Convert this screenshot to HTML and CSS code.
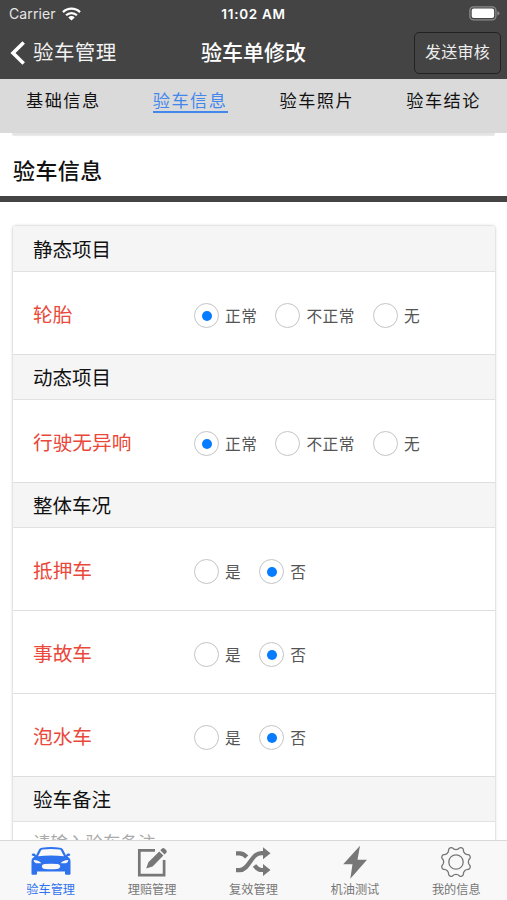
FILE: index.html
```html
<!DOCTYPE html>
<html lang="zh-CN">
<head>
<meta charset="utf-8">
<title>验车单修改</title>
<link rel="stylesheet" href="styles.css">
</head>
<body>
<div class="screen">
  <header class="header">
    <div class="status">
      <div class="carrier">Carrier
        <svg class="wifi" width="19" height="14" viewBox="0 0 19 14"><g fill="none" stroke="#fff" stroke-width="2.3"><path d="M1 5.1a12.2 12.2 0 0 1 17 0"/><path d="M4.1 8.3a7.7 7.7 0 0 1 10.8 0"/></g><path d="M6.3 10.4a4.6 4.6 0 0 1 6.4 0L9.500 13.600z" fill="#fff"/></svg>
      </div>
      <div class="time">11:02 AM</div>
      <svg class="battery" width="31" height="15" viewBox="0 0 31 15"><rect x=".9" y=".8" width="26" height="13" rx="3.6" fill="none" stroke="#8b8b8b" stroke-width="1.3"/><rect x="2.700" y="2.600" width="22.400" height="9.400" rx="2" fill="#fff"/><path d="M28.400 5q2 .7 2 2.300t-2 2.300z" fill="#8b8b8b"/></svg>
    </div>
    <div class="navbar">
      <a class="back"><svg width="16" height="24" viewBox="0 0 16 24"><path d="M13.700 1.500 3 12l10.700 10.500" fill="none" stroke="#fff" stroke-width="3.600"/></svg><span>验车管理</span></a>
      <h1 class="title">验车单修改</h1>
      <div class="action"><button class="submit">发送审核</button></div>
    </div>
  </header>
  <nav class="tabs">
    <a class="tab"><span>基础信息</span></a>
    <a class="tab active"><span>验车信息</span></a>
    <a class="tab"><span>验车照片</span></a>
    <a class="tab"><span>验车结论</span></a>
  </nav>
  <main class="content">
    <div class="previous-card"></div>
    <h2 class="section-title">验车信息</h2>
    <section class="card">
      <h3 class="group">静态项目</h3>
      <div class="row"><span class="label">轮胎</span><div class="options"><label class="option"><i class="radio on"></i><span>正常</span></label><label class="option"><i class="radio"></i><span>不正常</span></label><label class="option"><i class="radio"></i><span>无</span></label></div></div>
      <h3 class="group">动态项目</h3>
      <div class="row"><span class="label">行驶无异响</span><div class="options"><label class="option"><i class="radio on"></i><span>正常</span></label><label class="option"><i class="radio"></i><span>不正常</span></label><label class="option"><i class="radio"></i><span>无</span></label></div></div>
      <h3 class="group">整体车况</h3>
      <div class="row"><span class="label">抵押车</span><div class="options"><label class="option"><i class="radio"></i><span>是</span></label><label class="option"><i class="radio on"></i><span>否</span></label></div></div>
      <div class="row"><span class="label">事故车</span><div class="options"><label class="option"><i class="radio"></i><span>是</span></label><label class="option"><i class="radio on"></i><span>否</span></label></div></div>
      <div class="row"><span class="label">泡水车</span><div class="options"><label class="option"><i class="radio"></i><span>是</span></label><label class="option"><i class="radio on"></i><span>否</span></label></div></div>
      <h3 class="group">验车备注</h3>
      <div class="note">请输入验车备注</div>
    </section>
  </main>
  <footer class="tabbar">
    <a class="item selected">
      <svg width="42" height="34" viewBox="0 0 42 34"><path fill="currentColor" fill-rule="evenodd" d="M9 4.500Q10 3 12 2.700q9-1.200 18 0Q32 3 33 4.500l3 6 1-1.700q3-.7 3.400 1.200-.4 1-3 1.200 2.900 2 3.100 5v12.500q0 1-1 1h-3.500q-1 0-1-1v-2.300H7v2.300q0 1-1 1H2.500q-1 0-1-1V16.200q.2-3 3.100-5-2.600-.2-3-1.200.4-1.900 3.400-1.200l1 1.700zm2 .9L8 11.200q13-1.500 26 0l-3-5.800q-.5-.8-1.500-1-8.500-.9-17 0-1 .2-1.500 1zM3.600 14.900q.2 3 2.400 3.300l5.300.1q-1.800-3-7.700-3.400zm34.800 0q-5.900.4-7.700 3.400l5.300-.1q2.200-.3 2.400-3.300zM14.500 19q-2.700.2-2.700 2.200 0 2.400 3.200 2.700 6 .6 12 0 3.200-.3 3.200-2.700 0-2-2.700-2.200-6.500-.5-13 0z"/></svg>
      <span>验车管理</span>
    </a>
    <a class="item">
      <svg width="34" height="34" viewBox="0 0 34 34"><path d="M20 5.400H4.300v24.800h24.800V15" fill="none" stroke="currentColor" stroke-width="2.700"/><path d="m11.200 23.500 2.200-6.300L24.200 6.400l4.200 4.200-10.800 10.800zM25.300 5.300l1.800-1.800q1.200-1 2.400 0l1.800 1.800q1 1.200 0 2.400l-1.800 1.800z" fill="currentColor"/></svg>
      <span>理赔管理</span>
    </a>
    <a class="item">
      <svg width="38" height="34" viewBox="0 0 38 34"><g fill="none" stroke="currentColor" stroke-width="4.200"><path d="M2 25.200h3.500c10 0 11-17 22-17h2.700"/><path d="M2 8.400h3.500q4 0 7.200 3.600M20.500 20.500q3.300 4.500 7.200 4.500h2.500"/></g><path d="m29 2.200 7.500 6-7.500 6zM29 19l7.500 6-7.500 6z" fill="currentColor"/></svg>
      <span>复效管理</span>
    </a>
    <a class="item">
      <svg width="26" height="34" viewBox="0 0 26 34"><path d="M18 .700 1.200 19.200h9.300L8.300 33.700 25 14.700h-9.500z" fill="currentColor"/></svg>
      <span>机油测试</span>
    </a>
    <a class="item">
      <svg width="34" height="34" viewBox="-17 -17 34 34"><g fill="none" stroke="currentColor" stroke-width="1.300" stroke-linejoin="round"><path d="M14.040 3.630A2.800 2.800 0 0 1 12.490 7.360A4.700 4.700 0 0 0 7.360 12.490A2.800 2.800 0 0 1 3.630 14.040A4.700 4.700 0 0 0-3.630 14.040A2.800 2.800 0 0 1-7.360 12.490A4.700 4.700 0 0 0-12.490 7.360A2.800 2.800 0 0 1-14.040 3.630A4.700 4.700 0 0 0-14.040-3.630A2.800 2.800 0 0 1-12.490-7.360A4.700 4.700 0 0 0-7.360-12.490A2.800 2.800 0 0 1-3.630-14.040A4.700 4.700 0 0 0 3.630-14.040A2.800 2.800 0 0 1 7.360-12.490A4.700 4.700 0 0 0 12.490-7.360A2.800 2.800 0 0 1 14.040-3.630A4.700 4.700 0 0 0 14.040 3.630Z"/><circle r="7.200"/></g></svg>
      <span>我的信息</span>
    </a>
  </footer>
</div>
</body>
</html>
```
FILE: styles.css
```css
* { box-sizing: border-box; }
body { margin: 0; background: #fff; font-family: Inter, "Noto Sans CJK SC", sans-serif; color: #111; }
h1, h2, h3 { margin: 0; font-weight: 400; }
svg { display: block; flex: none; }
.screen { height: 900px; display: flex; flex-direction: column; overflow: hidden; }
.header { flex: none; height: 79px; background: #444; color: #fff; }
.status { height: 27px; display: grid; grid-template-columns: 1fr auto 1fr; align-items: center; padding: 0 7px 0 7px; font-size: 13.500px; }
.carrier { display: flex; align-items: center; gap: 6px; padding-left: 2px; color: #e6e6e6; font-size: 14px; letter-spacing: .1px; }
.time { font-weight: 600; letter-spacing: .7px; }
.battery { justify-self: end; }
.navbar { height: 52px; display: grid; grid-template-columns: 1fr auto 1fr; align-items: center; padding: 0 6px; }
.back { display: flex; align-items: center; gap: 7px; padding: 0 0 0 4px; font-size: 20.500px; letter-spacing: .4px; color: #f2f2f2; line-height: 30px; }
.title { font-size: 21px; font-weight: 500; line-height: 30px; padding-bottom: 1px; }
.action { display: flex; justify-content: flex-end; }
.submit { width: 87px; height: 42px; padding: 0 0 4px; border: 1.500px solid #222; border-radius: 5px; background: none; color: #eee; font: 16px/24px "Noto Sans CJK SC", sans-serif; letter-spacing: .3px; }
.tabs { flex: none; height: 54px; background: #dadada; display: grid; grid-template-columns: repeat(4, 1fr); }
.tab { display: flex; justify-content: center; align-items: flex-start; padding-top: 9px; }
.tab span { display: block; height: 25px; font-size: 17.200px; line-height: 26px; letter-spacing: 1.500px; white-space: nowrap; }
.active span { color: #4387ec; border-bottom: 2px solid #4387ec; }
.content { flex: 1; min-height: 0; overflow: hidden; }
.previous-card { height: 2px; margin: 0 12px; background: #e4e4e4; border-radius: 0 0 3px 3px; box-shadow: 0 1px 1px #e8e8e8; }
.section-title { height: 67px; padding: 20px 13px 0; font-size: 22px; line-height: 33px; letter-spacing: .4px; font-weight: 500; border-bottom: 6px solid #444; }
.card { margin: 24px 12px 0 13px; border-radius: 3px; box-shadow: 0 0 3px rgba(0, 0, 0, .3); }
.group { height: 45px; padding: 0 20px; background: #f5f5f5; font-size: 19.500px; line-height: 47px; border-bottom: 1px solid #e2e2e2; }
.group:first-child { height: 46px; line-height: 48px; border-radius: 3px 3px 0 0; }
.row { height: 83px; padding: 0 20px; display: grid; grid-template-columns: 161px 1fr; align-items: center; border-bottom: 1px solid #dedede; }
.label { color: #e9483b; font-size: 19.700px; line-height: 28px; padding-top: 3px; }
.options { display: flex; align-items: center; gap: 18px; padding-top: 5px; }
.option { display: flex; align-items: center; gap: 6px; font-size: 15.700px; line-height: 24px; letter-spacing: .5px; color: #555; }
.option span { padding-top: 3px; }
.radio { width: 25px; height: 25px; border: 1px solid #c4c4c4; border-radius: 50%; display: grid; place-items: center; background: #fff; }
.radio.on::before { content: ""; width: 10px; height: 10px; border-radius: 50%; background: #087cff; }
.note { height: 80px; padding: 8px 20px; font-size: 17.500px; line-height: 26px; color: #aaa; }
.tabbar { position: relative; flex: none; height: 60px; background: #f8f8f8; border-top: 1.500px solid #d8d8d8; display: grid; grid-template-columns: repeat(5, 1fr); }
.item { display: flex; flex-direction: column; align-items: center; padding-top: 4px; color: #777; font-size: 12.200px; line-height: 18px; }
.item span { margin-top: 2px; }
.selected { color: #2f72ed; }
```
